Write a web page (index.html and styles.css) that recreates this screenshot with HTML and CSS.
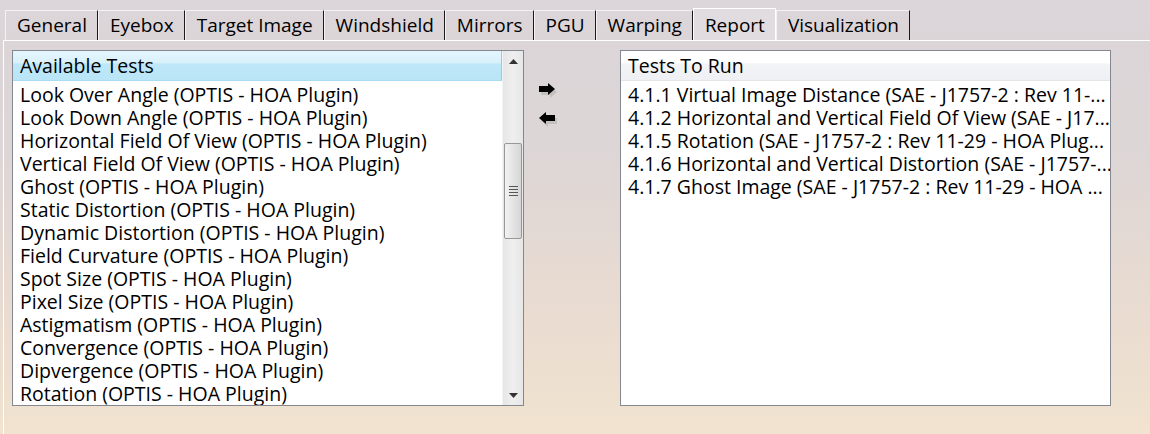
FILE: index.html
```html
<!DOCTYPE html>
<html lang="en">
<head>
  <meta charset="UTF-8" />
  <title>Report</title>
  <link rel="stylesheet" href="styles.css">
</head>
<body>

<nav class="tabs">
  <div class="tab">General</div>
  <div class="tab">Eyebox</div>
  <div class="tab">Target Image</div>
  <div class="tab">Windshield</div>
  <div class="tab">Mirrors</div>
  <div class="tab">PGU</div>
  <div class="tab">Warping</div>
  <div class="tab active">Report</div>
  <div class="tab">Visualization</div>
</nav>

<main class="panel">
  <div class="listbox">
    <div class="list-body">
      <div class="list-header available">Available Tests</div>
      <div class="item">Look Over Angle (OPTIS - HOA Plugin)</div>
      <div class="item">Look Down Angle (OPTIS - HOA Plugin)</div>
      <div class="item">Horizontal Field Of View (OPTIS - HOA Plugin)</div>
      <div class="item">Vertical Field Of View (OPTIS - HOA Plugin)</div>
      <div class="item">Ghost (OPTIS - HOA Plugin)</div>
      <div class="item">Static Distortion (OPTIS - HOA Plugin)</div>
      <div class="item">Dynamic Distortion (OPTIS - HOA Plugin)</div>
      <div class="item">Field Curvature (OPTIS - HOA Plugin)</div>
      <div class="item">Spot Size (OPTIS - HOA Plugin)</div>
      <div class="item">Pixel Size (OPTIS - HOA Plugin)</div>
      <div class="item">Astigmatism (OPTIS - HOA Plugin)</div>
      <div class="item">Convergence (OPTIS - HOA Plugin)</div>
      <div class="item">Dipvergence (OPTIS - HOA Plugin)</div>
      <div class="item">Rotation (OPTIS - HOA Plugin)</div>
    </div>
    <div class="scrollbar">
      <div class="scroll-arrow">
        <svg width="9" height="5" viewBox="0 0 9 5"><path d="M4.5 0 L9 5 L0 5 Z" fill="#333"/></svg>
      </div>
      <div class="scroll-track">
        <div class="thumb">
          <span></span><span></span><span></span><span></span>
        </div>
      </div>
      <div class="scroll-arrow">
        <svg width="9" height="5" viewBox="0 0 9 5"><path d="M0 0 L9 0 L4.5 5 Z" fill="#333"/></svg>
      </div>
    </div>
  </div>

  <div class="move-buttons">
    <button class="move">
      <svg width="22" height="17" viewBox="0 0 22 17">
        <path d="M1 3 H10 V0 L17 6 L10 12 V9 H1 Z" fill="#c4c0bd" transform="translate(2,3)"/>
        <path d="M1 3 H10 V0 L17 6 L10 12 V9 H1 Z" fill="#000"/>
      </svg>
    </button>
    <button class="move">
      <svg width="22" height="17" viewBox="0 0 22 17">
        <path d="M17 3 H8 V0 L1 6 L8 12 V9 H17 Z" fill="#c4c0bd" transform="translate(2,3)"/>
        <path d="M17 3 H8 V0 L1 6 L8 12 V9 H17 Z" fill="#000"/>
      </svg>
    </button>
  </div>

  <div class="listbox">
    <div class="list-body">
      <div class="list-header torun">Tests To Run</div>
      <div class="item">4.1.1 Virtual Image Distance (SAE - J1757-2 : Rev 11-...</div>
      <div class="item">4.1.2 Horizontal and Vertical Field Of View (SAE - J17...</div>
      <div class="item">4.1.5 Rotation (SAE - J1757-2 : Rev 11-29 - HOA Plug...</div>
      <div class="item">4.1.6 Horizontal and Vertical Distortion (SAE - J1757-...</div>
      <div class="item">4.1.7 Ghost Image (SAE - J1757-2 : Rev 11-29 - HOA ...</div>
    </div>
  </div>
</main>

</body>
</html>
```

FILE: styles.css
```css
:root {
  --text-color: #000;
  --list-border: #828790;
  --tab-dark: #1a1a1a;
}

html, body {
  height: 100%;
}

body {
  margin: 0;
  padding: 0;
  font-family: "Open Sans", "Noto Sans", sans-serif;
  font-size: 19.5px;
  color: var(--text-color);
  background: linear-gradient(to bottom, #dcd5d9 0%, #ddd6d6 35%, #eadcd0 75%, #f1e3cf 100%);
  overflow: hidden;
}

/* tab strip */
.tabs {
  display: flex;
  align-items: flex-end;
  height: 40px;
  padding-left: 5px;
  box-sizing: border-box;
}

.tab {
  height: 30px;
  line-height: 29px;
  padding: 0 10px 0 11px;
  font-size: 19px;
  border-top: 1px solid #f4f2f3;
  border-left: 1px solid #f4f2f3;
  border-right: 1px solid var(--tab-dark);
  box-sizing: border-box;
  white-space: nowrap;
}

.tab.active {
  height: 32px;
  line-height: 33px;
  background: #e1dcdf;
  border-top: 1px solid #fff;
  border-left: 1px solid #fff;
  border-right: 1px solid #fff;
}

/* tab page */
.panel {
  display: grid;
  grid-template-columns: 512px 96px 491px;
  margin-left: 3px;
  padding: 9px 0 0 8px;
  border-top: 1px solid #fff;
  border-left: 1px solid #fff;
  height: 395px;
  box-sizing: border-box;
}

.listbox {
  display: flex;
  height: 356px;
  background: #fff;
  border: 1px solid var(--list-border);
  box-sizing: border-box;
  overflow: hidden;
}

.list-body {
  flex: 1;
  min-width: 0;
}

.list-header {
  height: 30px;
  line-height: 30px;
  padding-left: 7px;
  box-sizing: border-box;
}

.list-header.available {
  background: linear-gradient(to bottom, #e4f6fd 0%, #d9f1fb 40%, #bee8f9 45%, #b9e5f7 100%);
  border-right: 1px solid #8dcdef;
  border-bottom: 1px solid #a9dcf3;
}

.list-header.torun {
  background: linear-gradient(to bottom, #ffffff 0%, #ffffff 40%, #f3f4f6 45%, #eef0f3 100%);
  border-bottom: 1px solid #e3e5e8;
}

.item {
  height: 23px;
  line-height: 23px;
  padding-left: 7px;
  white-space: nowrap;
}

.list-body .list-header + .item {
  margin-top: 2px;
}

/* scrollbar */
.scrollbar {
  width: 20px;
  display: flex;
  flex-direction: column;
  background: linear-gradient(to right, #e6e6e6, #efefef 50%, #e6e6e6);
  border-left: 1px solid #f4f4f4;
}

.scroll-arrow {
  height: 20px;
  display: flex;
  align-items: center;
  justify-content: center;
}

.scroll-track {
  flex: 1;
  padding-top: 72px;
}

.thumb {
  height: 94px;
  margin: 0 1px;
  border: 1px solid #979797;
  border-radius: 2px;
  background: linear-gradient(to right, #f2f2f2, #e4e4e4 50%, #d6d6d6);
  display: flex;
  flex-direction: column;
  align-items: center;
  justify-content: center;
  gap: 2px;
}

.thumb span {
  display: block;
  width: 9px;
  height: 1px;
  background: #555;
}

/* move buttons */
.move-buttons {
  display: flex;
  flex-direction: column;
  gap: 12px;
  padding: 33px 0 0 14px;
}

.move {
  width: 22px;
  height: 17px;
  padding: 0;
  border: 0;
  background: none;
  display: flex;
}
```
